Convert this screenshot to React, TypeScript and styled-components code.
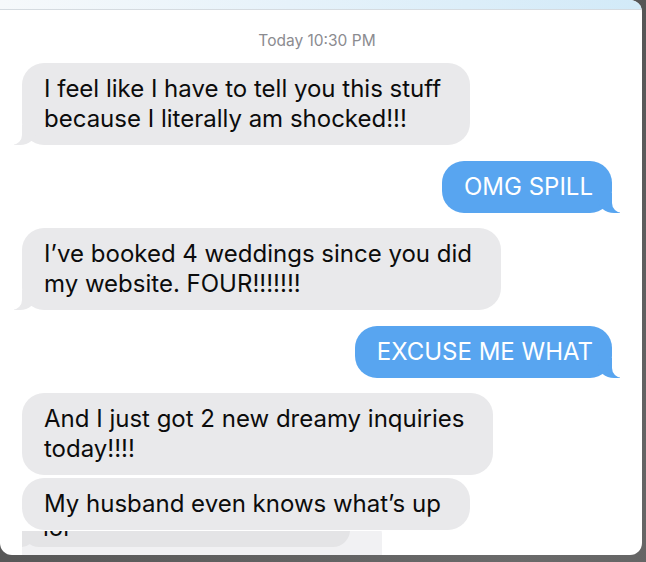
import styled, { createGlobalStyle } from "styled-components";

const GlobalStyle = createGlobalStyle`
  html, body {
    margin: 0;
    padding: 0;
    background: #5b5b5b;
  }
  * {
    box-sizing: border-box;
  }
`;

const Page = styled.div`
  width: 646px;
  height: 562px;
  background: radial-gradient(circle at 80% 100%, #6a6a6a, #4f4f4f);
  overflow: hidden;
`;

const Card = styled.div`
  width: 642px;
  height: 555px;
  background: #ffffff;
  border-radius: 0 12px 12px 12px;
  overflow: hidden;
  display: flex;
  flex-direction: column;
  font-family: Inter, "Liberation Sans", Arial, sans-serif;
`;

const TopBar = styled.div`
  height: 10px;
  flex-shrink: 0;
  background: linear-gradient(90deg, #f6f9fb 0%, #e6f2fa 45%, #d2eaf8 100%);
  border-bottom: 1px solid #d5dbe0;
`;

const Thread = styled.div`
  flex: 1;
  min-height: 0;
  display: flex;
  flex-direction: column;
  padding: 0 30px 0 22px;
`;

const Stamp = styled.div`
  margin-top: 22px;
  text-align: center;
  font-size: 15.5px;
  line-height: 18px;
  color: #8b8b90;
`;

const Row = styled.div<{ $me?: boolean; $gap: number }>`
  display: flex;
  justify-content: ${(p) => (p.$me ? "flex-end" : "flex-start")};
  margin-top: ${(p) => p.$gap}px;
`;

const Bubble = styled.div<{ $me?: boolean; $tail?: boolean }>`
  position: relative;
  background: ${(p) => (p.$me ? "#58a5f0" : "#e9e9eb")};
  color: ${(p) => (p.$me ? "#ffffff" : "#0c0c0c")};
  font-size: 24px;
  line-height: 30px;
  padding: 11px ${(p) => (p.$me ? 19 : 29)}px 11px 22px;
  border-radius: 22px;
  white-space: nowrap;

  ${(p) =>
    p.$tail &&
    (p.$me
      ? `
    &::before {
      content: "";
      position: absolute;
      bottom: 0;
      right: -8px;
      width: 22px;
      height: 20px;
      background: #58a5f0;
      border-bottom-left-radius: 16px 14px;
    }
    &::after {
      content: "";
      position: absolute;
      bottom: 0;
      right: -12px;
      width: 12px;
      height: 21px;
      background: #ffffff;
      border-bottom-left-radius: 10px;
    }
  `
      : `
    &::before {
      content: "";
      position: absolute;
      bottom: 0;
      left: -8px;
      width: 22px;
      height: 20px;
      background: #e9e9eb;
      border-bottom-right-radius: 16px 14px;
    }
    &::after {
      content: "";
      position: absolute;
      bottom: 0;
      left: -12px;
      width: 12px;
      height: 21px;
      background: #ffffff;
      border-bottom-right-radius: 10px;
    }
  `)}
`;

const Clip = styled.div`
  flex: 1;
  min-height: 0;
  margin-top: 1px;
  overflow: hidden;
`;

const Faint = styled.div`
  width: 360px;
  height: 60px;
  background: #f1f1f3;
  border-radius: 6px 22px 0 0;
`;

const LolBubble = styled(Bubble)`
  width: 328px;
  margin-top: -18px;
  padding: 0 21px 4px;
  background: #e4e4e6;
  &::before {
    background: #e4e4e6;
  }
  &::after {
    background: #f1f1f3;
  }
`;

type Msg = { me?: boolean; tail?: boolean; gap: number; lines: string[] };

const messages: Msg[] = [
  {
    gap: 13,
    tail: true,
    lines: ["I feel like I have to tell you this stuff", "because I literally am shocked!!!"],
  },
  { me: true, tail: true, gap: 16, lines: ["OMG SPILL"] },
  {
    gap: 15,
    tail: true,
    lines: ["I\u2019ve booked 4 weddings since you did", "my website. FOUR!!!!!!!"],
  },
  { me: true, tail: true, gap: 16, lines: ["EXCUSE ME WHAT"] },
  { gap: 15, lines: ["And I just got 2 new dreamy inquiries", "today!!!!"] },
  { gap: 3, lines: ["My husband even knows what\u2019s up"] },
];

export default function App() {
  return (
    <Page>
      <GlobalStyle />
      <Card>
        <TopBar />
        <Thread>
          <Stamp>Today 10:30 PM</Stamp>
          {messages.map((m, i) => (
            <Row key={i} $me={m.me} $gap={m.gap}>
              <Bubble $me={m.me} $tail={m.tail}>
                {m.lines.map((l, j) => (
                  <div key={j}>{l}</div>
                ))}
              </Bubble>
            </Row>
          ))}
          <Clip>
            <Faint>
              <LolBubble $tail>lol</LolBubble>
            </Faint>
          </Clip>
        </Thread>
      </Card>
    </Page>
  );
}
